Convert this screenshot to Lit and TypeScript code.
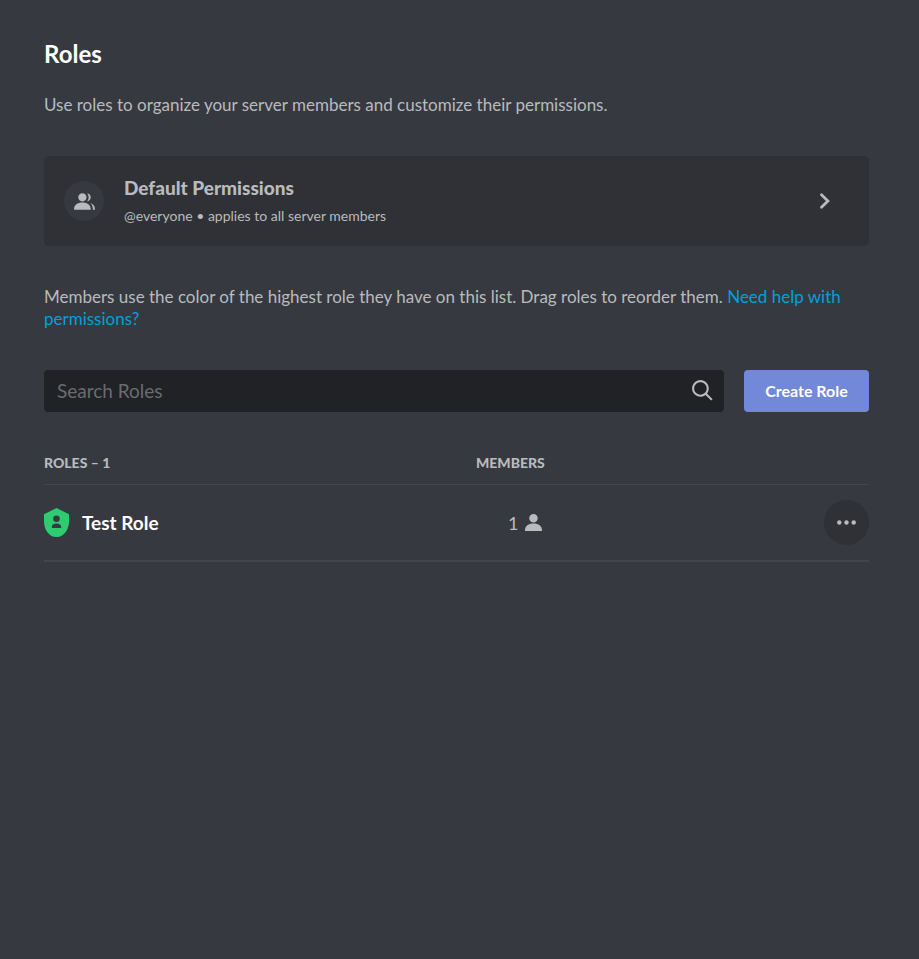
import { LitElement, html, svg, css } from "lit";
import { customElement, state } from "lit/decorators.js";

interface Role {
  name: string;
  members: number;
}

const personPath = svg`<path d="M14 8.006C14 10.211 12.206 12.006 10 12.006C7.795 12.006 6 10.211 6 8.006C6 5.801 7.794 4.006 10 4.006C12.206 4.006 14 5.801 14 8.006ZM2 19.006C2 15.473 5.29 13.006 10 13.006C14.711 13.006 18 15.473 18 19.006V20.006H2V19.006Z"/>`;

@customElement("app-root")
export class AppRoot extends LitElement {
  static styles = css`
    :host {
      display: block;
      box-sizing: border-box;
      min-height: 100vh;
      padding: 40px 50px 40px 44px;
      background: #36393f;
      color: #b9bbbe;
      font: 17px/22px Lato, "Open Sans", sans-serif;
    }
    * { box-sizing: border-box; }
    svg { display: block; fill: currentColor; }
    h1, p { margin: 0; }
    h1 { color: #fff; font-size: 24px; line-height: 28px; font-weight: 700; }
    button { font: inherit; color: inherit; border: 0; padding: 0; cursor: pointer; }
    .intro { margin-top: 26px; }
    .card {
      display: flex;
      align-items: center;
      width: 100%;
      min-height: 90px;
      margin-top: 40px;
      padding: 0 32px 0 20px;
      border-radius: 5px;
      background: #2f3136;
      text-align: left;
    }
    .badge {
      display: grid;
      place-items: center;
      width: 40px;
      height: 40px;
      border-radius: 50%;
      background: #36393f;
    }
    .card-text { flex: 1; margin-left: 20px; }
    .card-title, .card-note { display: block; }
    .card-title { font-size: 19px; line-height: 24px; font-weight: 900; }
    .card-note { font-size: 14px; line-height: 20px; margin-top: 6px; }
    .hint { margin-top: 40px; }
    a { color: #00a0dc; text-decoration: none; }
    .tools { display: flex; gap: 20px; margin-top: 40px; }
    .search {
      display: flex;
      flex: 1;
      align-items: center;
      height: 42px;
      padding: 0 9px 0 13px;
      border-radius: 4px;
      background: #202225;
    }
    input {
      flex: 1;
      min-width: 0;
      padding: 0;
      border: 0;
      outline: 0;
      background: none;
      color: #dcddde;
      font: inherit;
      font-size: 19px;
    }
    input::placeholder { color: #696c71; opacity: 1; }
    .search svg { margin-bottom: 2px; }
    .create {
      min-width: 125px;
      padding: 0 20px;
      border-radius: 4px;
      background: #7289da;
      color: #fff;
      font-size: 16px;
      font-weight: 700;
    }
    table { width: 100%; margin-top: 40px; border-collapse: separate; border-spacing: 0; table-layout: fixed; }
    th, td { padding: 0; text-align: left; }
    th { height: 33px; padding-bottom: 10px; border-bottom: 1px solid #42454a; font-size: 14px; font-weight: 900; text-transform: uppercase; }
    td { height: 77px; border-bottom: 2px solid #42454a; }
    .col-members { width: 348px; }
    .col-actions { width: 45px; }
    .role { display: flex; align-items: center; gap: 13px; color: #fff; font-size: 19px; font-weight: 700; }
    .shield { color: #2ecc71; }
    .count { display: flex; align-items: center; gap: 7px; padding-left: 32px; font-size: 18px; }
    .more {
      display: grid;
      place-items: center;
      width: 45px;
      height: 45px;
      border-radius: 50%;
      background: #2f3136;
    }
  `;

  @state() private query = "";

  private roles: Role[] = [{ name: "Test Role", members: 1 }];

  private onSearch(e: Event) {
    this.query = (e.target as HTMLInputElement).value;
  }

  render() {
    const shown = this.roles.filter((r) => r.name.toLowerCase().includes(this.query.toLowerCase()));
    return html`
      <h1>Roles</h1>
      <p class="intro">Use roles to organize your server members and customize their permissions.</p>
      <button class="card" type="button">
        <span class="badge">
          <svg width="25" height="25" viewBox="0 0 24 24" aria-hidden="true">
            ${personPath}
            <path d="M20 20.006H22V19.006C22 16.443 20.27 14.442 17.521 13.535C19.062 14.913 20 16.806 20 19.006V20.006Z"/>
            <path d="M14.883 11.908C16.666 11.504 18 9.908 18 8.006C18 5.969 16.469 4.282 14.497 4.037C15.432 5.095 16 6.485 16 8.006C16 9.449 15.489 10.774 14.638 11.81Z"/>
          </svg>
        </span>
        <span class="card-text">
          <span class="card-title">Default Permissions</span>
          <span class="card-note">@everyone • applies to all server members</span>
        </span>
        <svg width="25" height="25" viewBox="0 0 25 25" aria-hidden="true">
          <path d="M9.500 5.700L15.900 12L9.500 18.300" fill="none" stroke="currentColor" stroke-width="2.8" stroke-linecap="round"/>
        </svg>
      </button>
      <p class="hint">
        Members use the color of the highest role they have on this list. Drag roles to reorder them.
        <a href="#help">Need help with permissions?</a>
      </p>
      <div class="tools">
        <div class="search">
          <input type="text" aria-label="Search Roles" placeholder="Search Roles" .value=${this.query} @input=${this.onSearch} />
          <svg width="25" height="25" viewBox="0 0 24 24" aria-hidden="true">
            <path d="M21.707 20.293L16.314 14.9C17.403 13.504 18 11.799 18 10C18 7.863 17.167 5.854 15.656 4.344C14.146 2.832 12.137 2 10 2C7.863 2 5.854 2.832 4.344 4.344C2.833 5.854 2 7.863 2 10C2 12.137 2.833 14.146 4.344 15.656C5.854 17.168 7.863 18 10 18C11.799 18 13.504 17.404 14.9 16.314L20.293 21.706L21.707 20.293ZM10 16C8.397 16 6.891 15.376 5.758 14.243C4.624 13.11 4 11.603 4 10C4 8.398 4.624 6.891 5.758 5.758C6.891 4.624 8.397 4 10 4C11.603 4 13.109 4.624 14.242 5.758C15.376 6.891 16 8.398 16 10C16 11.603 15.376 13.11 14.242 14.243C13.109 15.376 11.603 16 10 16Z"/>
          </svg>
        </div>
        <button class="create" type="button">Create Role</button>
      </div>
      <table>
        <colgroup><col /><col class="col-members" /><col class="col-actions" /></colgroup>
        <thead>
          <tr><th scope="col">Roles – ${this.roles.length}</th><th scope="col">Members</th><th></th></tr>
        </thead>
        <tbody>
          ${shown.map((r) => html`
            <tr>
              <td>
                <div class="role">
                  <svg class="shield" width="25" height="29" viewBox="0 0 25 29" aria-hidden="true">
                    <path fill-rule="evenodd" d="M12.5 0L25 6.2V13.5C25 21 20.5 29 12.5 29C4.500 29 0 21 0 13.500V6.200ZM12.500 7.500A3.300 3.300 0 1 0 12.500 14.100A3.300 3.300 0 1 0 12.500 7.500ZM7.800 20H17.200V19C17.200 16.900 15.500 15.600 12.500 15.600C9.500 15.600 7.800 16.900 7.800 19Z"/>
                  </svg>
                  ${r.name}
                </div>
              </td>
              <td>
                <div class="count">
                  ${r.members}
                  <svg width="17" height="17" viewBox="2 4 16 16" aria-hidden="true">${personPath}</svg>
                </div>
              </td>
              <td>
                <button class="more" type="button" aria-label="More">
                  <svg width="19" height="5" viewBox="0 0 19 5" aria-hidden="true">
                    <circle cx="2.300" cy="2.500" r="2.200"/><circle cx="9.500" cy="2.500" r="2.200"/><circle cx="16.700" cy="2.500" r="2.200"/>
                  </svg>
                </button>
              </td>
            </tr>`)}
        </tbody>
      </table>
    `;
  }
}
